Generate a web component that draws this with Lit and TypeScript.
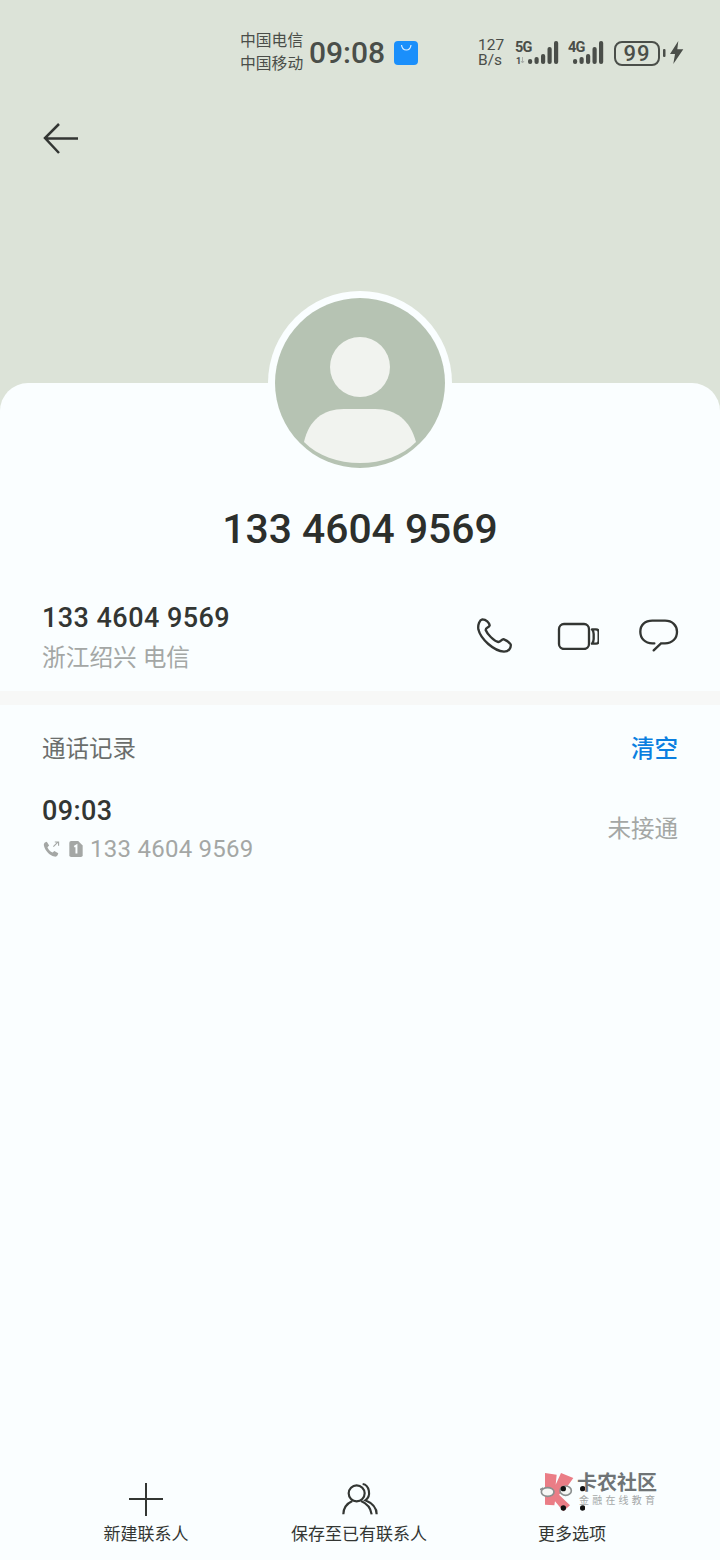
import { LitElement, html, css, svg } from "lit";
import { customElement } from "lit/decorators.js";

const ink = "#333633";
const statusInk = "#4a4e49";

const bars = (hs: number[]) => svg`${hs.map((h, i) => svg`<rect x=${i * 6.5} y=${23 - h} width="4.200" height=${h} rx="2" fill=${statusInk}/>`)}`;

@customElement("app-root")
export class AppRoot extends LitElement {
  static styles = css`
    :host { display: block; width: 720px; height: 1560px; background: #dce3d8; font-family: Roboto, "Noto Sans CJK SC", sans-serif; color: #333633; overflow: hidden; position: relative; }
    .page { display: flex; flex-direction: column; height: 1560px; }
    header { height: 383px; flex: none; box-sizing: border-box; padding-top: 30px; }
    .status { display: flex; align-items: center; height: 46px; padding-left: 240px; color: #4a4e49; }
    .carriers { font-size: 15.8px; line-height: 23px; width: 69px; white-space: nowrap; margin-top: -2px; }
    .time { font-size: 30px; font-weight: 500; width: 85px; line-height: 46px; }
    .bag { width: 24px; height: 24px; flex: none; display: block; }
    .speed { margin-left: 60px; width: 37px; font-size: 15.5px; line-height: 15px; text-align: left; }
    .net { display: block; flex: none; }
    .net text { font-family: Roboto, sans-serif; font-weight: 700; fill: #4a4e49; }
    .net .lbl { font-size: 14.5px; letter-spacing: -.8px; }
    .net .one { font-size: 9px; }
    .net.g5 { margin-right: 8px; }
    .bat { margin-left: 9px; display: flex; align-items: center; gap: 3px; }
    .batbox { box-sizing: border-box; width: 46px; height: 25px; border: 2px solid #4a4e49; border-radius: 8px; font-size: 22px; line-height: 21px; font-weight: 500; text-align: center; letter-spacing: 1px; }
    .back { display: block; margin: 45px 0 0 42px; }
    main { flex: 1; background: #fafeff; border-radius: 28px 28px 0 0; position: relative; display: flex; flex-direction: column; min-height: 0; }
    .ring { position: absolute; left: 268px; top: -92px; width: 184px; height: 184px; border-radius: 50%; background: #fafeff; clip-path: inset(0 0 50% 0); }
    .avatar { position: absolute; left: 275px; top: -85px; display: block; }
    h1 { margin: 120px 0 0; font-size: 40.8px; line-height: 52px; font-weight: 500; text-align: center; color: #2c2f2c; }
    .contact { display: flex; align-items: center; justify-content: space-between; padding: 0 41px 0 42px; height: 110px; margin-top: 26px; box-sizing: border-box; }
    .who { margin-top: 2px; }
    .num { font-size: 27px; line-height: 36px; font-weight: 500; letter-spacing: .45px; }
    .loc { font-size: 23.7px; line-height: 34px; color: #a4a7a5; margin-top: 5px; }
    .actions { display: flex; align-items: center; gap: 40px; }
    .actions svg { display: block; }
    .actions .phone { margin-right: 4px; }
    .sep { height: 14px; background: #f7f8f7; flex: none; }
    .loghead { display: flex; justify-content: space-between; align-items: center; padding: 0 42px; height: 46px; margin-top: 19px; font-size: 23.5px; color: #6b6e6c; }
    .clear { color: #0a7fe0; font-weight: 500; }
    .log { display: flex; justify-content: space-between; align-items: center; padding: 0 42px; margin-top: 23px; }
    .t { font-size: 27px; line-height: 36px; font-weight: 500; letter-spacing: .4px; }
    .sub { display: flex; align-items: center; font-size: 24px; line-height: 32px; color: #a4a7a5; margin-top: 4px; letter-spacing: .25px; }
    .sub svg { display: block; margin-left: 1px; }
    .sub .sim { margin: 0 7px 0 9px; }
    .miss { font-size: 23.5px; color: #a4a7a5; margin-bottom: 4px; }
    nav { margin-top: auto; display: grid; grid-template-columns: repeat(3, 213px); padding-left: 39.5px; height: 83px; flex: none; }
    .tab { display: flex; flex-direction: column; align-items: center; font-size: 17px; color: #333633; white-space: nowrap; }
    .tab svg, .tab .blank { display: block; height: 44px; }
    .tab span { line-height: 26px; }
    .wm { position: absolute; left: 540px; top: 1470px; display: flex; align-items: flex-start; pointer-events: none; }
    .wmt { margin: 1px 0 0 -8px; }
    .wm1 { font-size: 20px; line-height: 24px; color: #6f7476; font-weight: 700; }
    .wm2 { font-size: 10px; line-height: 14px; color: #a4a8a8; letter-spacing: 3.2px; margin-top: -1px; padding-left: 2px; white-space: nowrap; }
    .wm svg { display: block; }
  `;

  render() {
    return html`
      <div class="page">
        <header>
          <div class="status">
            <div class="carriers">中国电信<br />中国移动</div>
            <div class="time">09:08</div>
            <svg class="bag" viewBox="0 0 24 24">
              <rect width="24" height="24" rx="4" fill="#1a8ffb" />
              <path d="M7.500 4c.5 3.500 2 5 4.800 5s4.300-1.500 4.700-5" fill="none" stroke="#dff0ff" stroke-width="1.200" />
            </svg>
            <div class="speed">127<br />B/s</div>
            <svg class="net g5" width="45" height="26" viewBox="0 0 45 26">
              <text class="lbl" x="0" y="12">5G</text>
              <text class="one" x="1" y="24">1</text>
              <path d="M7.500 17v6M6 21l1.500 2 1.500-2" stroke="#a9aeaa" fill="none" stroke-width="1" />
              <g transform="translate(13 1)">${bars([5, 7, 10, 17, 23])}</g>
            </svg>
            <svg class="net" width="37" height="26" viewBox="0 0 37 26">
              <text class="lbl" x="0" y="12">4G</text>
              <g transform="translate(5 1)">${bars([5, 7, 10, 17, 23])}</g>
            </svg>
            <div class="bat">
              <div class="batbox">99</div>
              <svg width="21" height="26" viewBox="0 0 21 26">
                <rect x="0" y="9" width="2.500" height="8" rx="1" fill=${statusInk} />
                <path d="M15.300 1 7 14h5l-1.700 10 10-14.700h-6z" fill=${statusInk} />
              </svg>
            </div>
          </div>
          <svg class="back" width="38" height="34" viewBox="0 0 38 34" fill="none" stroke="#333633" stroke-width="2.500">
            <path d="M36 17.500H3M17 3 3 17 17 32" />
          </svg>
        </header>
        <main>
          <div class="ring"></div>
          <svg class="avatar" width="170" height="170" viewBox="0 0 170 170">
            <circle cx="85" cy="85" r="85" fill="#b6c3b3" />
            <circle cx="85" cy="69" r="30" fill="#f1f3ef" />
            <path d="M29 144c5-22 19-33 40-33h31c21 0 35 11 41 33-14 14-34 21-56 21s-42-7-56-21z" fill="#f1f3ef" />
          </svg>
          <h1>133 4604 9569</h1>
          <div class="contact">
            <div class="who">
              <div class="num">133 4604 9569</div>
              <div class="loc">浙江绍兴 电信</div>
            </div>
            <div class="actions">
              <svg class="phone" width="36" height="36" viewBox="54 56 108 108" fill="none" stroke=${ink} stroke-width="7" stroke-linejoin="round">
                <path d="M70 60C62 62 56 75 58 90 65 120 105 155 135 157 150 157 157 145 155 135 150 128 140 122 135 120 128 118 125 128 118 128 105 125 85 105 80 92 80 85 90 85 92 78 90 70 82 60 70 60z" />
              </svg>
              <svg width="42" height="28" viewBox="288 66 126 84" fill="none" stroke=${ink} stroke-width="7" stroke-linejoin="round">
                <rect x="294" y="72" width="90" height="75" rx="15" />
                <path d="M393 88h12c5 0 8 3 8 8v27c0 5-3 8-8 8h-12c4-5 5-10 5-14v-15c0-4-1-9-5-14z" />
              </svg>
              <svg width="40" height="34" viewBox="540 62 120 102" fill="none" stroke=${ink} stroke-width="7" stroke-linecap="round">
                <path d="M586 135h-6c-22 0-36-15-36-35s14-33 36-33h38c22 0 36 14 36 33 0 20-14 35-36 35h-12l-22 21" />
              </svg>
            </div>
          </div>
          <div class="sep"></div>
          <div class="loghead"><span>通话记录</span><span class="clear">清空</span></div>
          <div class="log">
            <div>
              <div class="t">09:03</div>
              <div class="sub">
                <svg width="17" height="17" viewBox="0 0 18 18">
                  <path d="M2 1.500 4 .8l2.500 4-1.800 1.700c1 2.500 3 4.500 5.500 5.800l1.800-1.800 4.200 2.500-.8 2.200c-.7 1.300-2 1.700-3.300 1.300C6.500 15 2.500 10.500 1 5 .7 3.500 1 2.300 2 1.500z" fill="#a4a7a5" />
                  <path d="M11 6l5-5M12.500 1H16.500V5" stroke="#a4a7a5" stroke-width="1.200" fill="none" />
                </svg>
                <svg class="sim" width="14" height="16" viewBox="0 0 15 18">
                  <path d="M2 0h8l5 5v11a2 2 0 0 1-2 2H2a2 2 0 0 1-2-2V2a2 2 0 0 1 2-2z" fill="#a4a7a5" />
                  <path d="M5.500 6.500l2.500-1.500V14" stroke="#fafeff" stroke-width="2.200" fill="none" />
                </svg>
                <span>133 4604 9569</span>
              </div>
            </div>
            <div class="miss">未接通</div>
          </div>
          <nav>
            <div class="tab">
              <svg width="36" height="44" viewBox="0 0 36 44" stroke=${ink} stroke-width="2" fill="none">
                <path d="M1 22h34M18 6v33" />
              </svg>
              <span>新建联系人</span>
            </div>
            <div class="tab">
              <svg width="38" height="44" viewBox="750 21 114 132" stroke=${ink} stroke-width="6.500" fill="none">
                <circle cx="800" cy="70" r="24" />
                <path d="M760 133C760 113 772 100 787 93M813 93C830 100 842 113 845 133" />
                <path d="M818 42C838 45 845 78 826 91 848 100 860 115 860 133" />
              </svg>
              <span>保存至已有联系人</span>
            </div>
            <div class="tab">
              <div class="blank"></div>
              <span>更多选项</span>
            </div>
          </nav>
        </main>
      </div>
      <div class="wm">
        <svg width="45" height="45" viewBox="15 6 135 135">
          <path d="M30 15 65 20 62 50 78 15 115 30 92 62 72 80 105 112 85 130 60 100 58 112 30 110Z" fill="#ea7d86" />
          <path d="M15 65 25 60" stroke="#8b8f8f" stroke-width="5" />
          <ellipse cx="38" cy="72" rx="19" ry="13" fill="#f6f7f5" stroke="#8b8f8f" stroke-width="5" />
          <ellipse cx="92" cy="68" rx="17" ry="14" fill="#f6f7f5" stroke="#8b8f8f" stroke-width="5" />
          <circle cx="85" cy="62" r="8" fill="#111" />
          <circle cx="143" cy="62" r="8" fill="#111" />
          <circle cx="85" cy="120" r="8" fill="#111" />
          <circle cx="143" cy="120" r="8" fill="#111" />
        </svg>
        <div class="wmt">
          <div class="wm1">卡农社区</div>
          <div class="wm2">金融在线教育</div>
        </div>
      </div>
    `;
  }
}
